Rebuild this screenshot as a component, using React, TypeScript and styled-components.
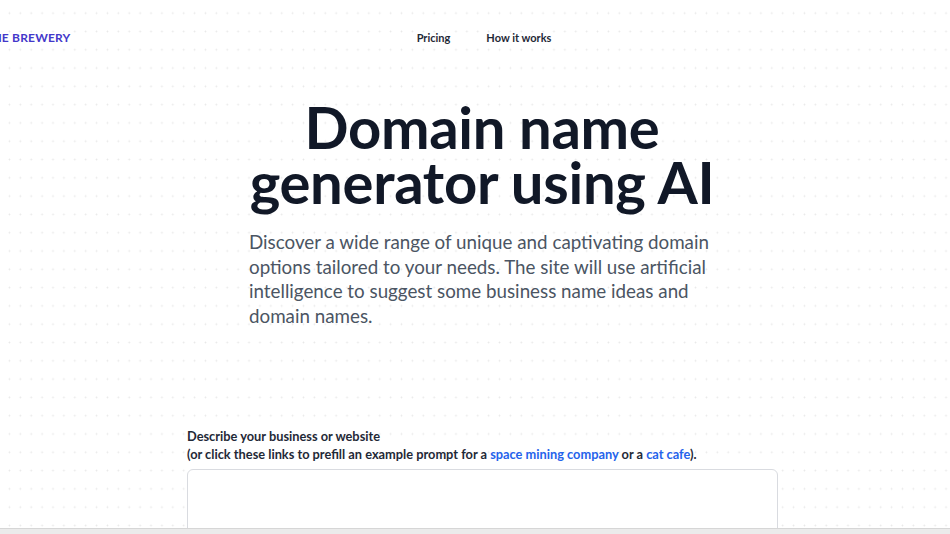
import React from "react";
import styled, { createGlobalStyle } from "styled-components";

const Global = createGlobalStyle`
  html, body { margin: 0; padding: 0; height: 100%; overflow: hidden; }
  body {
    font-family: Lato, "Noto Sans", sans-serif;
    background: #fff;
  }
`;

const Page = styled.div`
  position: relative;
  width: 950px;
  height: 534px;
  overflow: hidden;
  display: flex;
  flex-direction: column;
  background-color: #fff;
  background-image: radial-gradient(circle, #e8e8e8 0.8px, transparent 1.1px);
  background-size: 10.9px 18.3px;
  background-position: 4px 4px;
`;

const Nav = styled.header`
  display: grid;
  grid-template-columns: 1fr auto 1fr;
  align-items: center;
  height: 20px;
  margin-top: 30px;
`;

const Logo = styled.div`
  margin-left: -15px;
  font-size: 12px;
  font-weight: 700;
  letter-spacing: 0.2px;
  color: #4338ca;
  white-space: nowrap;
`;

const NavLinks = styled.nav`
  display: flex;
  gap: 36px;
  margin-left: 18px;
`;

const NavLink = styled.a`
  font-size: 11px;
  font-weight: 700;
  color: #1f2937;
  text-decoration: none;
`;

const Hero = styled.section`
  width: 466px;
  margin: 54px 0 0 249px;
  display: flex;
  flex-direction: column;
`;

const Title = styled.h1`
  margin: 0;
  text-align: center;
  font-size: 58px;
  line-height: 55px;
  font-weight: 700;
  letter-spacing: -0.3px;
  color: #111827;
`;

const Lead = styled.p`
  margin: 21px 0 0;
  font-size: 18.8px;
  line-height: 24.7px;
  color: #4b5563;
`;

const Form = styled.section`
  width: 591px;
  margin: 98px 0 0 187px;
  display: flex;
  flex-direction: column;
`;

const Label = styled.label`
  font-size: 12.8px;
  line-height: 18px;
  font-weight: 700;
  color: #1f2937;
`;

const Link = styled.a`
  color: #2563eb;
  text-decoration: none;
`;

const TextArea = styled.textarea`
  margin-top: 6px;
  height: 90px;
  border: 1px solid #d9dbe0;
  border-radius: 6px;
  background: #fff;
  resize: none;
  outline: none;
`;

const ScrollBar = styled.div`
  position: absolute;
  left: 0;
  right: 0;
  bottom: 0;
  height: 5px;
  background: #ebebeb;
  border-top: 1px solid #d6d6d6;
`;

export default function App() {
  return (
    <Page>
      <Global />
      <Nav>
        <Logo>THE BREWERY</Logo>
        <NavLinks>
          <NavLink href="#">Pricing</NavLink>
          <NavLink href="#">How it works</NavLink>
        </NavLinks>
        <div />
      </Nav>
      <Hero>
        <Title>
          Domain name
          <br />
          generator using AI
        </Title>
        <Lead>
          Discover a wide range of unique and captivating domain options
          tailored to your needs. The site will use artificial intelligence to
          suggest some business name ideas and domain names.
        </Lead>
      </Hero>
      <Form>
        <Label>
          Describe your business or website
          <br />
          (or click these links to prefill an example prompt for a{" "}
          <Link href="#">space mining company</Link> or a{" "}
          <Link href="#">cat cafe</Link>).
        </Label>
        <TextArea />
      </Form>
      <ScrollBar />
    </Page>
  );
}
